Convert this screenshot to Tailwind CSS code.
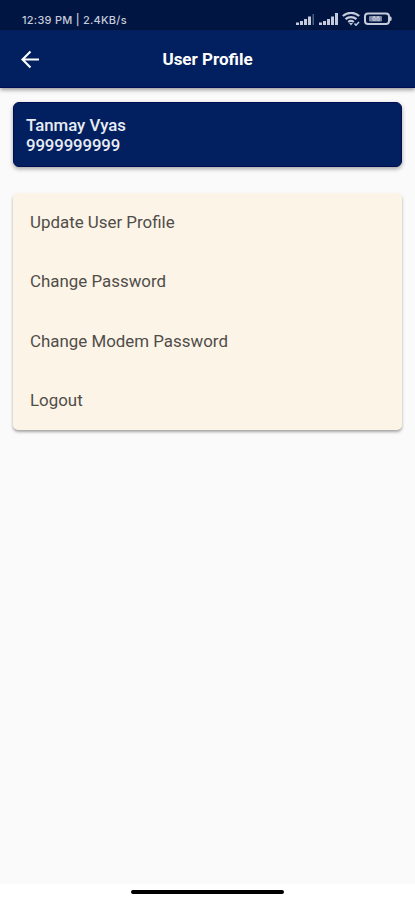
<!DOCTYPE html>
<html lang="en">
<head>
<meta charset="utf-8">
<title>User Profile</title>
<script src="https://cdn.jsdelivr.net/npm/@tailwindcss/browser@4"></script>
</head>
<body class="flex h-[900px] w-[415px] flex-col overflow-hidden bg-[#fafafa] font-['Roboto',sans-serif]">
<div class="flex h-[30px] shrink-0 items-start justify-between bg-[#001541] pt-[12px] pr-[23px] pl-[22px] text-[#c5cbdb]">
  <span class="pt-[1px] text-[11px] leading-[15px] font-medium tracking-[0.25px] whitespace-nowrap font-['Inter',sans-serif]">12:39 PM | 2.4KB/s</span>
  <div class="flex items-start">
    <svg class="mt-[1px] mr-[4px] h-[14px] w-[19px]" viewBox="0 0 19 14" fill="currentColor"><path d="M0 9.500h3V12H0zM4 8h3v4H4zM8 6h3v6H8zM12 3.500h3V12h-3z"/><path d="M16.500 1h1.500v11h-1.500z" opacity=".4"/></svg>
    <svg class="mt-[1px] mr-[4px] h-[14px] w-[19px]" viewBox="0 0 19 14" fill="currentColor"><path d="M0 9.500h3V12H0zM4 8h3v4H4zM8 6h3v6H8zM12 3.500h3V12h-3zM16 0h3v12h-3z"/></svg>
    <svg class="mr-[4px] h-[14px] w-[18px]" viewBox="0 0 18 14" fill="none" stroke="currentColor" stroke-width="2.200"><path d="M.8 4C5.500-.2 12.500-.2 17.200 4M3.500 7.200c3.200-2.800 7.800-2.800 11 0M6.200 10c1.700-1.300 3.900-1.300 5.600 0"/><path d="M7 11h4l-2 2.500z" fill="currentColor" stroke="none"/><path d="m12.500 11.500 1.500 1.700 3-3.200" stroke-width="1.500"/></svg>
    <svg class="h-[13px] w-[28px]" viewBox="0 0 28 13"><rect x="1" y="1.500" width="24" height="10.500" rx="3" fill="none" stroke="currentColor" stroke-width="2"/><path d="M25.500 4.500h1q1.200 0 1.200 2.200t-1.200 2.200h-1z" fill="currentColor"/><rect x="5" y="4" width="13" height="5.500" rx="1" fill="#7d88a5"/><text x="12" y="9.300" text-anchor="middle" font-family="Roboto" font-size="7" font-weight="700" fill="#c5cbdb">66</text></svg>
  </div>
</div>
<header class="relative grid h-[58px] shrink-0 grid-cols-[1fr_auto_1fr] items-center border-b border-[#000d50] bg-[#02205f] px-[20px] text-white shadow-[0_2px_4px_rgba(0,0,0,0.38)]">
  <svg class="h-[20px] w-[20px]" viewBox="0 0 20 20" fill="none" stroke="currentColor" stroke-width="2.100"><path d="M19 10.500H3M10.500 2.500l-8 8 8 8"/></svg>
  <h1 class="text-[17px] leading-[22px] font-bold whitespace-nowrap">User Profile</h1>
</header>
<main class="flex grow flex-col px-[13px] pt-[14px]">
  <section class="h-[65px] rounded-[6px] border border-[#000d50] bg-[#02205f] pt-[12px] pl-[12px] text-[16.800px] leading-[20px] font-medium text-[#e8ecf5] shadow-[0_2px_4px_rgba(0,0,0,0.35)]">
    <p>Tanmay Vyas</p>
    <p class="tracking-[-0.120px]">9999999999</p>
  </section>
  <nav class="mt-[26px] flex h-[237px] flex-col rounded-[5px] bg-[#fdf4e8] pt-[0.400px] pl-[17px] text-[16.900px] text-[#504d49] shadow-[0_2px_3px_rgba(0,0,0,0.34)]">
    <a class="flex h-[59.200px] items-center">Update User Profile</a>
    <a class="flex h-[59.200px] items-center">Change Password</a>
    <a class="flex h-[59.200px] items-center">Change Modem Password</a>
    <a class="flex h-[59.200px] items-center">Logout</a>
  </nav>
</main>
<footer class="flex h-[16px] shrink-0 justify-center bg-white pt-[6px]"><div class="h-[3.500px] w-[153px] rounded-full bg-black"></div></footer>
</body>
</html>
